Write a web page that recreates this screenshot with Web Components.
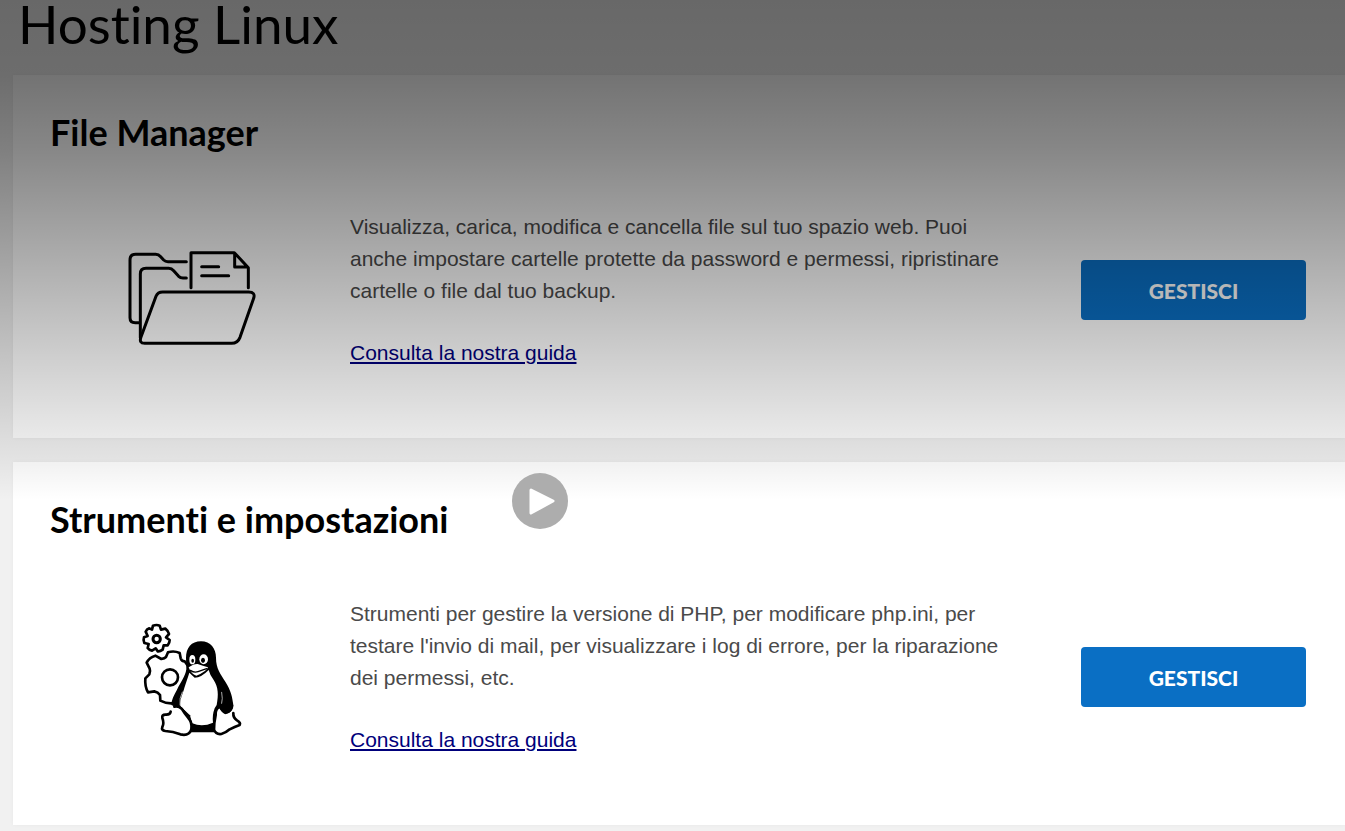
<!DOCTYPE html>
<html lang="it">
<head>
<meta charset="utf-8">
<title>Hosting Linux</title>
<style>
  body {
    margin: 0;
    background: #f1f1f1;
    font-family: "Liberation Sans", Arial, sans-serif;
  }
</style>
</head>
<body>
<hosting-page>
  <span slot="title">Hosting Linux</span>
  <tool-card>
    <span slot="title">File Manager</span>
    <folder-icon slot="icon"></folder-icon>
    Visualizza, carica, modifica e cancella file sul tuo spazio web. Puoi anche impostare cartelle protette da password e permessi, ripristinare cartelle o file dal tuo backup.
  </tool-card>
  <tool-card>
    <span slot="title">Strumenti e impostazioni</span>
    <tux-icon slot="icon"></tux-icon>
    Strumenti per gestire la versione di PHP, per modificare php.ini, per testare l'invio di mail, per visualizzare i log di errore, per la riparazione dei permessi, etc.
  </tool-card>
  <play-button slot="overlay"></play-button>
</hosting-page>

<script>
// HostingPage.js
const pageTemplate = document.createElement("template");

pageTemplate.innerHTML = /* html */ `
<style>
  :host {
    display: block;
    position: relative;
    min-height: 100vh;
    font-variant-ligatures: none;
  }
  h1 {
    margin: 0;
    padding: 0 18px 27px;
    font: 400 53px/48px Lato, sans-serif;
    font-variant-ligatures: none;
    color: #000;
  }
  main {
    display: flex;
    flex-direction: column;
    gap: 24px;
    padding: 0 0 6px 13px;
  }
  .shade {
    position: absolute;
    inset: 0 0 auto;
    height: 500px;
    pointer-events: none;
    background: linear-gradient(
      rgba(0, 0, 0, .57) 0,
      rgba(0, 0, 0, .55) 75px,
      rgba(0, 0, 0, .47) 150px,
      rgba(0, 0, 0, .35) 240px,
      rgba(0, 0, 0, .2) 350px,
      rgba(0, 0, 0, .1) 425px,
      rgba(0, 0, 0, .05) 465px,
      transparent 500px
    );
  }
</style>
<h1><slot name="title"></slot></h1>
<main><slot></slot></main>
<div class="shade"></div>
<slot name="overlay"></slot>
`;

class HostingPage extends HTMLElement {
  constructor() {
    super();
    this.attachShadow({ mode: "open" });
    this.shadowRoot.appendChild(pageTemplate.content.cloneNode(true));
  }
}

// ToolCard.js
const cardTemplate = document.createElement("template");

cardTemplate.innerHTML = /* html */ `
<style>
  :host {
    display: block;
    padding: 33px 39px 69px 37px;
    background: #fff;
    box-shadow: 0 0 4px rgba(0, 0, 0, .04);
  }
  h2 {
    margin: 0 0 55px;
    font: 700 36px/48px Lato, sans-serif;
    font-variant-ligatures: none;
    color: #000;
  }
  .row {
    display: grid;
    grid-template-columns: 228px 1fr 225px;
    align-items: center;
    column-gap: 72px;
  }
  .icon {
    display: flex;
    justify-content: center;
    padding-left: 54px;
  }
  .info {
    font-size: 21px;
    line-height: 32px;
    color: #4a4a4a;
  }
  p {
    margin: 0 0 30px;
  }
  a {
    color: #00007b;
    text-decoration-thickness: 2px;
    text-underline-offset: 2px;
  }
  button {
    height: 60px;
    padding: 2px 0 0;
    border: 0;
    border-radius: 4px;
    background: #0a6fc4;
    color: #fff;
    font: 900 21px/24px Lato, sans-serif;
    cursor: pointer;
  }
</style>
<h2><slot name="title"></slot></h2>
<div class="row">
  <div class="icon"><slot name="icon"></slot></div>
  <div class="info">
    <p><slot></slot></p>
    <a href="#guida">Consulta la nostra guida</a>
  </div>
  <button type="button">GESTISCI</button>
</div>
`;

class ToolCard extends HTMLElement {
  constructor() {
    super();
    this.attachShadow({ mode: "open" });
    this.shadowRoot.appendChild(cardTemplate.content.cloneNode(true));
  }
}

// icons
const iconStyle = /* html */ `
<style>
  :host { display: block; flex: none; }
  svg { display: block; width: 130px; height: 130px; }
</style>
`;

class FolderIcon extends HTMLElement {
  constructor() {
    super();
    this.attachShadow({ mode: "open" }).innerHTML = /* html */ `
${iconStyle}
<svg viewBox="48 -30 390 390" fill="none" stroke="#000" stroke-width="9" stroke-linecap="round" stroke-linejoin="round" aria-hidden="true">
  <path d="M86 263H76Q60 263 60 248V75Q60 58 77 58H137Q146 58 152 65L161 75Q166 80 174 80H229"/>
  <path d="M91 308V117Q91 100 108 100H176Q185 100 191 107L206 124Q211 129 219 129H229"/>
  <path d="M243 158V53H373L415 98V158M374 55V96H413"/>
  <path d="M275 95H326M275 122H356"/>
  <path d="M158 171H416Q437 171 431 190L390 307Q383 325 365 325H104Q86 325 93 306L138 184Q143 171 158 171Z"/>
</svg>`;
  }
}

class TuxIcon extends HTMLElement {
  constructor() {
    super();
    this.attachShadow({ mode: "open" }).innerHTML = /* html */ `
${iconStyle}
<svg viewBox="-12 -9 390 390" fill="none" stroke="#000" stroke-width="8" stroke-linecap="round" stroke-linejoin="round" aria-hidden="true">
  <!-- gears -->
  <path d="M66 44L69 32Q80 28 89 32L93 44L106 41Q114 47 117 57L108 67L119 75Q119 84 113 91L101 91L98 104Q90 110 83 109L77 100L66 107Q57 105 53 99L56 87L43 84Q39 75 42 67L53 63L47 50Q50 43 58 40Z"/>
  <circle cx="80" cy="72" r="11" stroke-width="9"/>
  <path d="M172 150L164 139Q155 139 152 130L149 114Q132 106 114 112L108 126Q104 130 94 132L76 122Q58 127 50 143L59 161Q62 168 58 178L46 190Q44 214 54 232L73 229Q84 231 90 240L91 257Q108 266 127 265"/>
  <circle cx="120" cy="187" r="24"/>
  <!-- body -->
  <path fill="#000" stroke="none" d="M168 130C168 98 184 79 213 79C242 79 258 101 258 128C258 161 272 177 286 200C303 226 307 247 310 270C311 286 299 296 284 297L256 286L252 352H182L183 323L151 282L124 270C124 254 132 240 141 224C151 203 166 185 169 163Z"/>
  <path fill="#fff" stroke="none" d="M178 173L194 188Q214 188 236 165Q240 181 251 195C265 216 266 240 260 270L254 280Q246 301 249 323Q217 337 187 325Q180 302 151 273C150 249 158 239 163 219C168 202 174 187 178 173Z"/>
  <path d="M157 231Q147 250 150 270M275 232Q279 252 275 265" stroke="#fff" stroke-width="2"/>
  <!-- face -->
  <ellipse cx="187" cy="134" rx="9" ry="14" fill="#fff" stroke="none"/>
  <ellipse cx="221" cy="133" rx="13" ry="15" fill="#fff" stroke="none"/>
  <ellipse cx="188" cy="137" rx="4" ry="6" fill="#000" stroke="none"/>
  <ellipse cx="219" cy="136" rx="6" ry="8" fill="#000" stroke="none"/>
  <path d="M176 157Q191 146 203 147Q219 153 234 157Q230 170 199 182Q183 177 176 157Z" fill="#fff" stroke="none"/>
  <path d="M181 166Q193 174 204 170L230 161" stroke-width="4"/>
  <!-- feet -->
  <path fill="#fff" d="M122 290Q121 300 106 299Q95 299 97 309Q103 325 97 336Q93 346 106 348Q129 349 151 358Q177 364 184 343Q187 321 175 309Q162 293 155 281Q145 272 133 275"/>
  <path fill="#fff" d="M266 277Q256 283 257 300Q252 323 252 344Q257 359 274 357Q287 354 299 343Q314 335 329 330Q333 322 321 316Q309 308 310 294L287 297Q273 291 266 277Z" stroke="none"/>
  <path d="M266 277Q256 283 257 300Q252 323 252 344Q257 359 274 357Q287 354 299 343Q314 335 329 330Q333 322 321 316Q309 308 310 294"/>
  <path fill="#000" stroke="none" d="M151 274L180 301L186 325L171 307Z"/>
  <path fill="#000" stroke="none" d="M265 271L310 270Q309 293 286 298Q272 292 265 271Z"/>
</svg>`;
  }
}

// PlayButton.js
class PlayButton extends HTMLElement {
  constructor() {
    super();
    this.attachShadow({ mode: "open" }).innerHTML = /* html */ `
<style>
  :host {
    position: absolute;
    top: 473px;
    left: 512px;
  }
  button {
    display: block;
    width: 56px;
    height: 56px;
    padding: 0;
    border: 0;
    border-radius: 50%;
    background: #adadad;
    cursor: pointer;
  }
  svg { display: block; }
</style>
<button type="button" aria-label="Riproduci">
  <svg width="56" height="56" viewBox="0 0 56 56" aria-hidden="true">
    <path d="M19 17L41 28L19 40Z" fill="#fff" stroke="#fff" stroke-width="3" stroke-linejoin="round"/>
  </svg>
</button>`;
  }
}

customElements.define("hosting-page", HostingPage);
customElements.define("tool-card", ToolCard);
customElements.define("folder-icon", FolderIcon);
customElements.define("tux-icon", TuxIcon);
customElements.define("play-button", PlayButton);
</script>
</body>
</html>
